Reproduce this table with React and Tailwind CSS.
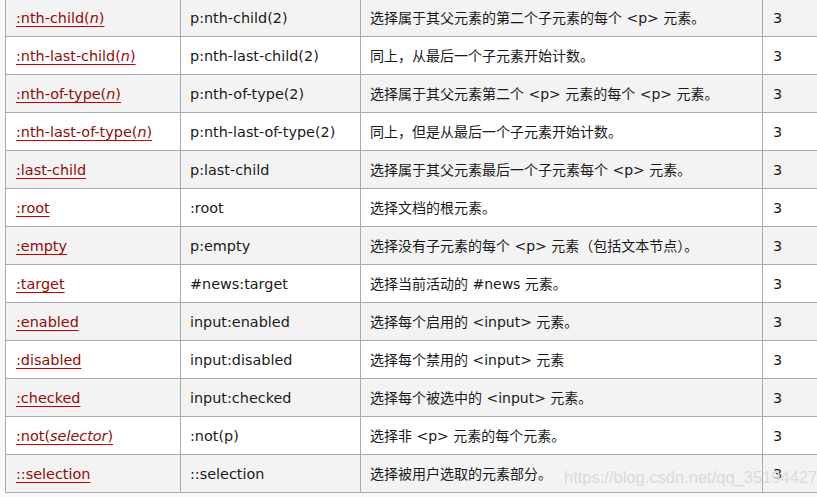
import React from "react";

const rows = [
  { sel: [":nth-child(", <i key="i">n</i>, ")"], ex: "p:nth-child(2)", desc: "选择属于其父元素的第二个子元素的每个 <p> 元素。" },
  { sel: [":nth-last-child(", <i key="i">n</i>, ")"], ex: "p:nth-last-child(2)", desc: "同上，从最后一个子元素开始计数。" },
  { sel: [":nth-of-type(", <i key="i">n</i>, ")"], ex: "p:nth-of-type(2)", desc: "选择属于其父元素第二个 <p> 元素的每个 <p> 元素。" },
  { sel: [":nth-last-of-type(", <i key="i">n</i>, ")"], ex: "p:nth-last-of-type(2)", desc: "同上，但是从最后一个子元素开始计数。" },
  { sel: [":last-child"], ex: "p:last-child", desc: "选择属于其父元素最后一个子元素每个 <p> 元素。" },
  { sel: [":root"], ex: ":root", desc: "选择文档的根元素。" },
  { sel: [":empty"], ex: "p:empty", desc: "选择没有子元素的每个 <p> 元素（包括文本节点）。" },
  { sel: [":target"], ex: "#news:target", desc: "选择当前活动的 #news 元素。" },
  { sel: [":enabled"], ex: "input:enabled", desc: "选择每个启用的 <input> 元素。" },
  { sel: [":disabled"], ex: "input:disabled", desc: "选择每个禁用的 <input> 元素" },
  { sel: [":checked"], ex: "input:checked", desc: "选择每个被选中的 <input> 元素。" },
  { sel: [":not(", <i key="i">selector</i>, ")"], ex: ":not(p)", desc: "选择非 <p> 元素的每个元素。" },
  { sel: ["::selection"], ex: "::selection", desc: "选择被用户选取的元素部分。" },
];

export default function App() {
  return (
    <div
      className="relative w-[817px] h-[497px] overflow-hidden bg-[#f9f9f9] text-[14.4px] text-[#1a1a1a]"
      style={{ fontFamily: '"DejaVu Sans", "Noto Sans CJK SC", sans-serif' }}
    >
      <div className="ml-[5px] -mt-[2px] w-[840px] border-l border-t border-[#ababab]">
        {rows.map((r, i) => (
          <div
            key={i}
            className={`flex h-[38px] border-b border-[#ababab] ${i % 2 === 0 ? "bg-[#f3f3f3]" : "bg-white"}`}
          >
            <div className="w-[175px] shrink-0 border-r border-[#ababab] pl-[10px] pt-[2px] flex items-center">
              <span className="text-[#900b09] underline decoration-[#cc0000] decoration-1 underline-offset-[3px]">
                {r.sel}
              </span>
            </div>
            <div className="w-[180px] shrink-0 border-r border-[#ababab] pl-[9px] pt-[2px] flex items-center">
              {r.ex}
            </div>
            <div className="w-[402px] shrink-0 border-r border-[#ababab] pl-[9px] pt-[2px] flex items-center text-[14px]">
              {r.desc}
            </div>
            <div className="flex-1 pl-[10px] pt-[2px] flex items-center">3</div>
          </div>
        ))}
      </div>
      <div
        className="absolute left-[564px] top-[465px] text-[16.5px] text-[#dadada] whitespace-nowrap pointer-events-none"
        style={{ fontFamily: '"Liberation Sans", Arial, sans-serif' }}
      >
        https://blog.csdn.net/qq_35194427
      </div>
    </div>
  );
}
